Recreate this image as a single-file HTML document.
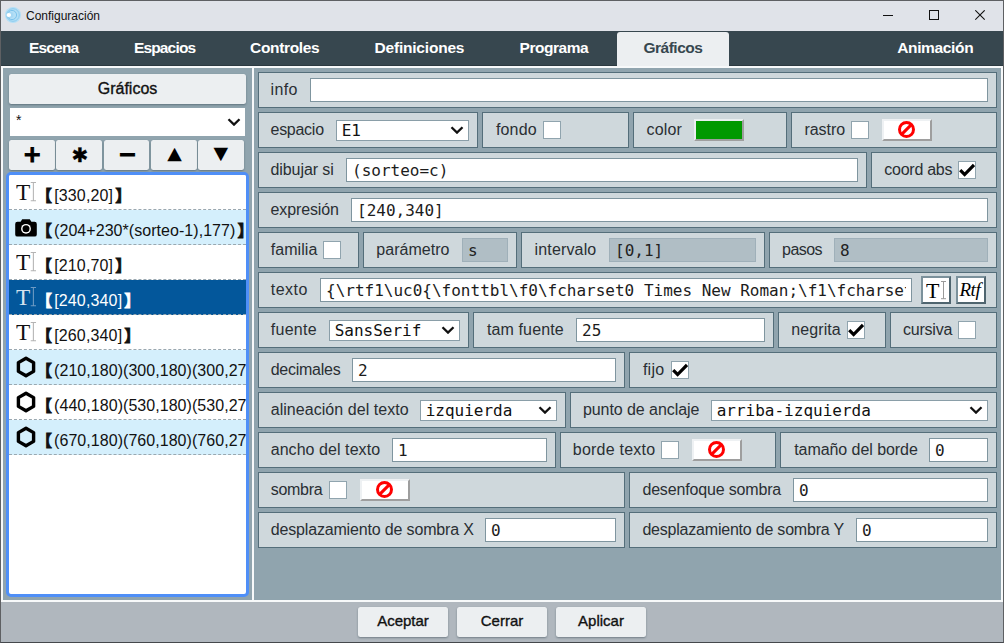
<!DOCTYPE html>
<html lang="es">
<head>
<meta charset="utf-8">
<title>Configuración</title>
<style>
*{box-sizing:border-box;margin:0;padding:0}
html,body{width:1004px;height:643px;overflow:hidden;background:#90a4ae}
body{position:relative;font-family:"Liberation Sans",sans-serif;font-size:16px;color:#111;line-height:1}
#frame{position:absolute;left:0;top:0;width:1004px;height:643px;border:1px solid #5e6063;border-bottom-color:#44484c;z-index:50}
#titlebar{position:absolute;left:0;top:0;width:1004px;height:31px;background:#e0e3e9}
#titlebar .ttl{position:absolute;left:26px;top:9px;font-size:12px;line-height:14px;color:#111}
#titlebar svg{position:absolute}
#tabs{position:absolute;left:0;top:31px;width:1004px;height:35px;background:#37474f;border-bottom:1px solid #2c3a41}
#acttab{position:absolute;left:617px;top:1px;width:112px;height:34px;background:#eceff1;border-radius:3px 3px 0 0}
.tabt{position:absolute;top:7px;font-weight:bold;font-size:15.500px;line-height:19px;white-space:nowrap}
#main{position:absolute;left:1px;top:66px;width:1002px;height:536px;background:#90a4ae;border:2px solid #f7f9fa}
#vsep{position:absolute;left:252px;top:68px;width:2px;height:532px;background:#f7f9fa}
#bottom{position:absolute;left:0;top:602px;width:1004px;height:41px;background:#b0b7be}
.btn{position:absolute;background:#eceff1;border-radius:2.500px;box-shadow:0 1px 2px rgba(40,60,70,.45);text-align:center;color:#111;white-space:nowrap;-webkit-text-stroke:.35px #111}
.g{position:absolute;font-family:"DejaVu Sans","Liberation Sans",sans-serif;font-weight:bold;color:#000;-webkit-text-stroke:0;display:block}
.box{position:absolute;height:36px;background:#cfd8dc;border:1px solid #546e7a;white-space:nowrap;color:#222}
.box>*{position:absolute}
.lbl{top:8px;line-height:18px;font-size:16px;color:#2a2f33;white-space:pre}
.inp{top:5px;height:24px;background:#fff;border:1px solid #7f959f;font-family:"DejaVu Sans Mono","Liberation Mono",monospace;font-size:16px;line-height:23px;padding-left:5px;color:#1c1c1c;overflow:hidden;white-space:pre}
.inp::after{content:"";position:absolute;right:0;top:0;bottom:0;width:5px;background:inherit}
.inp.dis{background:#b0bec5;border-color:#9fb0b9;color:#222}
.sel{top:7px;height:21px;background:#fff;border:1px solid #8a9ea8;font-family:"DejaVu Sans Mono","Liberation Mono",monospace;font-size:16px;line-height:19px;padding-left:4.700px;color:#111;overflow:hidden;white-space:pre}
.sel .arr{position:absolute;right:4px;top:5.400px}
.chk{top:8px;width:18px;height:18px;background:#fff;border:1px solid #90a4ae}
.chk .ck{position:absolute;left:0;top:0}
.nob{top:6px;height:22px;background:#fff;border:2px solid #eef1f3;border-right-color:#9e9e9e;border-bottom-color:#9e9e9e;text-align:center}
.nob svg{position:absolute;left:50%;top:-.600px;margin-left:-9.600px}
.col{top:6px;height:22px;background:#009900;border:2px solid #e9eef0;border-right-color:#9e9e9e;border-bottom-color:#9e9e9e}
.tb{top:3px;height:28px;background:#fff;border:2px solid #7b919b;border-right-color:#4f656f;border-bottom-color:#4f656f}
.tb svg{position:absolute;left:2.700px;top:2.800px}
.rtf{position:absolute;left:1.500px;top:.500px;font-family:"Liberation Serif",serif;font-style:italic;font-size:19px;line-height:22px;letter-spacing:-.5px;color:#000}
#list{position:absolute;left:6px;top:172px;width:243px;height:425px;background:#fff;border:3px solid #4f8ff7;border-radius:5px;overflow:hidden}
.li{position:absolute;left:0;width:237px;height:35px;border-bottom:1px dashed #9aa8b0;background:#fff;overflow:hidden;white-space:nowrap}
.li.alt{background:#d4effc}
.li.selr{background:#03579b;color:#fff}
.li .ic{position:absolute;left:6px;top:7px}
.li .icT{left:6.800px;top:7.100px}
.li .icH{left:7.300px;top:6px}
.li .icC{left:6.400px;top:7.800px}
.li .lt{position:absolute;left:25px;top:9px;font-size:16px;line-height:20px;color:#111;letter-spacing:.15px}
.li.selr .lt{color:#fff}
.br{margin:0 2px;-webkit-text-stroke:.9px currentColor;font-family:"Noto Sans CJK JP","Noto Sans CJK SC",sans-serif;font-weight:bold}
#lsel{position:absolute;left:10px;top:108px;width:235px;height:28px;background:#fff}
</style>
</head>
<body>
<div id="titlebar">
<svg style="left:5px;top:7px" width="16" height="16" viewBox="0 0 16 16"><circle cx="8" cy="8" r="8" fill="#b4dff6"/><circle cx="8" cy="8" r="6.3" fill="none" stroke="#8ccbee" stroke-width="1"/><circle cx="7" cy="8" r="4.600" fill="none" stroke="#7cc3ec" stroke-width="1"/><circle cx="5.500" cy="8" r="3" fill="#a6d8f4"/><ellipse cx="3.800" cy="8" rx="2.300" ry="1.900" fill="#fff"/></svg>
<span class="ttl">Configuración</span>
<svg style="left:883px;top:10px" width="11" height="11" viewBox="0 0 11 11"><path d="M0 5.500h10" stroke="#111" stroke-width="1"/></svg>
<svg style="left:929px;top:10px" width="11" height="11" viewBox="0 0 11 11"><rect x=".5" y=".5" width="9" height="9" fill="none" stroke="#111" stroke-width="1"/></svg>
<svg style="left:975px;top:10px" width="11" height="11" viewBox="0 0 11 11"><path d="M.3.300l9.400 9.400M9.700.300.300 9.700" stroke="#111" stroke-width="1.100"/></svg>
</div>
<div id="tabs"><div id="acttab"></div>
<span class="tabt" style="left:29.0px;letter-spacing:-0.83px;color:#fff">Escena</span>
<span class="tabt" style="left:133.9px;letter-spacing:-0.83px;color:#fff">Espacios</span>
<span class="tabt" style="left:250.1px;letter-spacing:-0.35px;color:#fff">Controles</span>
<span class="tabt" style="left:374.5px;letter-spacing:-0.2px;color:#fff">Definiciones</span>
<span class="tabt" style="left:519.5px;letter-spacing:-0.45px;color:#fff">Programa</span>
<span class="tabt" style="left:643.5px;letter-spacing:-0.51px;color:#37474f">Gráficos</span>
<span class="tabt" style="left:897.2px;letter-spacing:-0.35px;color:#fff">Animación</span>
</div>
<div id="main"></div>
<div id="vsep"></div>

<div class="btn" style="left:9px;top:74px;width:237px;height:30px;line-height:30px;font-size:16px">Gráficos</div>
<div id="lsel"><span style="position:absolute;left:6px;top:5px;font-size:14px">*</span><svg style="position:absolute;right:4px;top:10px" width="14" height="8" viewBox="0 0 14 8"><path d="M1.500 1.200 7 6.600 12.500 1.200" fill="none" stroke="#111" stroke-width="2.300"/></svg></div>

<div class="btn" style="left:9px;top:140px;width:45.800px;height:30px"><span class="g" style="left:13.64px;top:3.30px;font-size:22.7px;line-height:22.7px;-webkit-text-stroke:.9px #000;">+</span></div>
<div class="btn" style="left:56.3px;top:140px;width:45.800px;height:30px"><span class="g" style="left:15.30px;top:5.25px;font-size:20px;line-height:20px;-webkit-text-stroke:.3px #000;">✱</span></div>
<div class="btn" style="left:103.6px;top:140px;width:45.800px;height:30px"><span class="g" style="left:14.04px;top:2.60px;font-size:22.7px;line-height:22.7px;-webkit-text-stroke:.9px #000;">−</span></div>
<div class="btn" style="left:150.9px;top:140px;width:45.800px;height:30px"><span class="g" style="left:16.30px;top:3.80px;font-size:19px;line-height:19px;transform:scaleY(.92);">▲</span></div>
<div class="btn" style="left:198.2px;top:140px;width:45.800px;height:30px"><span class="g" style="left:15.40px;top:3.70px;font-size:19px;line-height:19px;transform:scaleY(.92);">▼</span></div>

<div id="list">
<div class="li" style="top:0px"><span class="ic icT"><svg width="23.32" height="21.2" viewBox="0 0 22 20"><text x="0" y="17" font-family="Liberation Serif,serif" font-size="22" fill="#111">T</text><path d="M13.9 .500h5M16.4 .500v17.200M13.9 17.700h5" stroke="#b4b4b4" stroke-width="1" fill="none"/></svg></span><span class="lt"><span class="br">【</span>[330,20]<span class="br">】</span></span></div>
<div class="li alt" style="top:35px"><span class="ic icC"><svg width="22" height="20" viewBox="0 0 22 20"><path d="M7.2 1.2h7.6l1.6 2.6h3.2a2.2 2.2 0 0 1 2.2 2.2v10.4a2.2 2.2 0 0 1-2.2 2.2H2.4a2.2 2.2 0 0 1-2.2-2.2V6a2.2 2.2 0 0 1 2.200-2.2h3.200z" fill="#000"/><circle cx="11" cy="10.8" r="4.9" fill="#fff"/><circle cx="11" cy="10.8" r="3.500" fill="#000"/></svg></span><span class="lt" style="letter-spacing:.05px"><span class="br">【</span>(204+230*(sorteo-1),177)<span class="br">】</span></span></div>
<div class="li" style="top:70px"><span class="ic icT"><svg width="23.32" height="21.2" viewBox="0 0 22 20"><text x="0" y="17" font-family="Liberation Serif,serif" font-size="22" fill="#111">T</text><path d="M13.9 .500h5M16.4 .500v17.200M13.9 17.700h5" stroke="#b4b4b4" stroke-width="1" fill="none"/></svg></span><span class="lt"><span class="br">【</span>[210,70]<span class="br">】</span></span></div>
<div class="li alt selr" style="top:105px"><span class="ic icT"><svg width="23.32" height="21.2" viewBox="0 0 22 20"><text x="0" y="17" font-family="Liberation Serif,serif" font-size="22" fill="#d5e2ee">T</text><path d="M13.9 .500h5M16.4 .500v17.200M13.9 17.700h5" stroke="#6f9bc4" stroke-width="1" fill="none"/></svg></span><span class="lt"><span class="br">【</span>[240,340]<span class="br">】</span></span></div>
<div class="li" style="top:140px"><span class="ic icT"><svg width="23.32" height="21.2" viewBox="0 0 22 20"><text x="0" y="17" font-family="Liberation Serif,serif" font-size="22" fill="#111">T</text><path d="M13.9 .500h5M16.4 .500v17.200M13.9 17.700h5" stroke="#b4b4b4" stroke-width="1" fill="none"/></svg></span><span class="lt"><span class="br">【</span>[260,340]<span class="br">】</span></span></div>
<div class="li alt" style="top:175px"><span class="ic icH"><svg width="20" height="22" viewBox="0 0 20 22"><path d="M10 2.2 17.6 6.600v8.800L10 19.800 2.400 15.400V6.600z" fill="none" stroke="#000" stroke-width="3.400" stroke-linejoin="round"/></svg></span><span class="lt" style="letter-spacing:.05px"><span class="br">【</span>(210,180)(300,180)(300,270)(210,270)<span class="br">】</span></span></div>
<div class="li" style="top:210px"><span class="ic icH"><svg width="20" height="22" viewBox="0 0 20 22"><path d="M10 2.2 17.6 6.600v8.800L10 19.800 2.400 15.400V6.600z" fill="none" stroke="#000" stroke-width="3.400" stroke-linejoin="round"/></svg></span><span class="lt" style="letter-spacing:.05px"><span class="br">【</span>(440,180)(530,180)(530,270)(440,270)<span class="br">】</span></span></div>
<div class="li alt" style="top:245px"><span class="ic icH"><svg width="20" height="22" viewBox="0 0 20 22"><path d="M10 2.2 17.6 6.600v8.800L10 19.800 2.400 15.400V6.600z" fill="none" stroke="#000" stroke-width="3.400" stroke-linejoin="round"/></svg></span><span class="lt" style="letter-spacing:.05px"><span class="br">【</span>(670,180)(760,180)(760,270)(670,270)<span class="br">】</span></span></div>
</div>

<div class="box" style="left:258px;top:72px;width:739px">
<span class="lbl" style="left:11.5px;letter-spacing:0.4px">info</span>
<span class="inp" style="left:51px;width:678px"></span>
</div>
<div class="box" style="left:258px;top:112px;width:220px">
<span class="lbl" style="left:11.5px;letter-spacing:-0.27px">espacio</span>
<span class="sel" style="left:77px;width:133px">E1<svg class="arr" width="14" height="8" viewBox="0 0 14 8"><path d="M1.5 1.2 7 6.600 12.500 1.200" fill="none" stroke="#111" stroke-width="2.300"/></svg></span>
</div>
<div class="box" style="left:482px;top:112px;width:147px">
<span class="lbl" style="left:12.9px;letter-spacing:0.19px">fondo</span>
<span class="chk" style="left:60px"></span>
</div>
<div class="box" style="left:633px;top:112px;width:154px">
<span class="lbl" style="left:12.6px;letter-spacing:0.12px">color</span>
<span class="col" style="left:60px;width:50px"></span>
</div>
<div class="box" style="left:791px;top:112px;width:206px">
<span class="lbl" style="left:12.4px;letter-spacing:-0.03px">rastro</span>
<span class="chk" style="left:59px"></span>
<span class="nob" style="left:90px;width:50px"><svg width="19" height="19" viewBox="0 0 19 19"><circle cx="9.5" cy="9.5" r="7" fill="none" stroke="#ff0000" stroke-width="3"/><path d="M4.6 14.4 14.4 4.6" stroke="#ff0000" stroke-width="3"/></svg></span>
</div>
<div class="box" style="left:258px;top:152px;width:609px">
<span class="lbl" style="left:11.5px;letter-spacing:-0.08px">dibujar si</span>
<span class="inp" style="left:87px;width:512px">(sorteo=c)</span>
</div>
<div class="box" style="left:871px;top:152px;width:126px">
<span class="lbl" style="left:12.3px;letter-spacing:-0.26px">coord abs</span>
<span class="chk" style="left:86px"><svg class="ck" width="16" height="16" viewBox="0 0 16 16"><path d="M1.200 8.200 5.600 12.500 15 2.900" fill="none" stroke="#000" stroke-width="3.200"/></svg></span>
</div>
<div class="box" style="left:258px;top:192px;width:739px">
<span class="lbl" style="left:11.5px;letter-spacing:-0.12px">expresión</span>
<span class="inp" style="left:92px;width:637px">[240,340]</span>
</div>
<div class="box" style="left:258px;top:232px;width:101px">
<span class="lbl" style="left:11.7px;letter-spacing:0.07px">familia</span>
<span class="chk" style="left:64px"></span>
</div>
<div class="box" style="left:363px;top:232px;width:154px">
<span class="lbl" style="left:12.3px;letter-spacing:0.02px">parámetro</span>
<span class="inp dis" style="left:98px;width:46px">s</span>
</div>
<div class="box" style="left:521px;top:232px;width:244px">
<span class="lbl" style="left:12.5px;letter-spacing:0.16px">intervalo</span>
<span class="inp dis" style="left:87px;width:147px">[0,1]</span>
</div>
<div class="box" style="left:769px;top:232px;width:228px">
<span class="lbl" style="left:12.1px;letter-spacing:-0.56px">pasos</span>
<span class="inp dis" style="left:64px;width:154px">8</span>
</div>
<div class="box" style="left:258px;top:272px;width:739px">
<span class="lbl" style="left:11.7px;letter-spacing:0.5px">texto</span>
<span class="inp" style="left:61px;width:592px">{\rtf1\uc0{\fonttbl\f0\fcharset0 Times New Roman;\f1\fcharset0 Arial;}</span>
<span class="tb" style="left:662px;width:30px"><svg width="22" height="20" viewBox="0 0 22 20"><text x="0" y="17" font-family="Liberation Serif,serif" font-size="22" fill="#000">T</text><path d="M15 .500h5M17.5 .500v17.200M15 17.700h5" stroke="#9a9a9a" stroke-width="1" fill="none"/></svg></span>
<span class="tb" style="left:697px;width:30px"><span class="rtf">Rtf</span></span>
</div>
<div class="box" style="left:258px;top:312px;width:211px">
<span class="lbl" style="left:11.7px;letter-spacing:0.3px">fuente</span>
<span class="sel" style="left:70px;width:131px">SansSerif<svg class="arr" width="14" height="8" viewBox="0 0 14 8"><path d="M1.5 1.2 7 6.600 12.500 1.200" fill="none" stroke="#111" stroke-width="2.300"/></svg></span>
</div>
<div class="box" style="left:473px;top:312px;width:301px">
<span class="lbl" style="left:12.9px;letter-spacing:0.13px">tam fuente</span>
<span class="inp" style="left:102px;width:189px">25</span>
</div>
<div class="box" style="left:778px;top:312px;width:108px">
<span class="lbl" style="left:12.2px;letter-spacing:0.11px">negrita</span>
<span class="chk" style="left:68px"><svg class="ck" width="16" height="16" viewBox="0 0 16 16"><path d="M1.200 8.200 5.600 12.500 15 2.900" fill="none" stroke="#000" stroke-width="3.200"/></svg></span>
</div>
<div class="box" style="left:890px;top:312px;width:107px">
<span class="lbl" style="left:11.9px;letter-spacing:-0.2px">cursiva</span>
<span class="chk" style="left:67px"></span>
</div>
<div class="box" style="left:258px;top:352px;width:367px">
<span class="lbl" style="left:11.7px;letter-spacing:-0.26px">decimales</span>
<span class="inp" style="left:93px;width:264px">2</span>
</div>
<div class="box" style="left:629px;top:352px;width:368px">
<span class="lbl" style="left:12.9px;letter-spacing:0.26px">fijo</span>
<span class="chk" style="left:41px"><svg class="ck" width="16" height="16" viewBox="0 0 16 16"><path d="M1.200 8.200 5.600 12.500 15 2.900" fill="none" stroke="#000" stroke-width="3.200"/></svg></span>
</div>
<div class="box" style="left:258px;top:392px;width:308px">
<span class="lbl" style="left:11.7px;letter-spacing:0.05px">alineación del texto</span>
<span class="sel" style="left:161px;width:137px">izquierda<svg class="arr" width="14" height="8" viewBox="0 0 14 8"><path d="M1.5 1.2 7 6.600 12.500 1.200" fill="none" stroke="#111" stroke-width="2.300"/></svg></span>
</div>
<div class="box" style="left:570px;top:392px;width:427px">
<span class="lbl" style="left:11.9px;letter-spacing:-0.06px">punto de anclaje</span>
<span class="sel" style="left:140px;width:277px">arriba-izquierda<svg class="arr" width="14" height="8" viewBox="0 0 14 8"><path d="M1.5 1.2 7 6.600 12.500 1.200" fill="none" stroke="#111" stroke-width="2.300"/></svg></span>
</div>
<div class="box" style="left:258px;top:432px;width:298px">
<span class="lbl" style="left:11.7px;letter-spacing:0.06px">ancho del texto</span>
<span class="inp" style="left:133px;width:155px">1</span>
</div>
<div class="box" style="left:560px;top:432px;width:216px">
<span class="lbl" style="left:11.8px;letter-spacing:0.23px">borde texto</span>
<span class="chk" style="left:100px"></span>
<span class="nob" style="left:131px;width:50px"><svg width="19" height="19" viewBox="0 0 19 19"><circle cx="9.5" cy="9.5" r="7" fill="none" stroke="#ff0000" stroke-width="3"/><path d="M4.6 14.4 14.4 4.6" stroke="#ff0000" stroke-width="3"/></svg></span>
</div>
<div class="box" style="left:780px;top:432px;width:217px">
<span class="lbl" style="left:13.2px;letter-spacing:-0.06px">tamaño del borde</span>
<span class="inp" style="left:148px;width:59px">0</span>
</div>
<div class="box" style="left:258px;top:472px;width:367px">
<span class="lbl" style="left:11.7px;letter-spacing:-0.28px">sombra</span>
<span class="chk" style="left:70px"></span>
<span class="nob" style="left:101px;width:50px"><svg width="19" height="19" viewBox="0 0 19 19"><circle cx="9.5" cy="9.5" r="7" fill="none" stroke="#ff0000" stroke-width="3"/><path d="M4.6 14.4 14.4 4.6" stroke="#ff0000" stroke-width="3"/></svg></span>
</div>
<div class="box" style="left:629px;top:472px;width:368px">
<span class="lbl" style="left:12.4px;letter-spacing:-0.16px">desenfoque sombra</span>
<span class="inp" style="left:163px;width:195px">0</span>
</div>
<div class="box" style="left:258px;top:512px;width:367px">
<span class="lbl" style="left:11.7px;letter-spacing:-0.16px">desplazamiento de sombra X</span>
<span class="inp" style="left:226px;width:131px">0</span>
</div>
<div class="box" style="left:629px;top:512px;width:368px">
<span class="lbl" style="left:12.4px;letter-spacing:-0.21px">desplazamiento de sombra Y</span>
<span class="inp" style="left:226px;width:132px">0</span>
</div>

<div id="bottom">
<div class="btn" style="left:357.800px;top:5px;width:90.400px;height:30px;line-height:28px;font-size:15px">Aceptar</div>
<div class="btn" style="left:456.800px;top:5px;width:90.400px;height:30px;line-height:28px;font-size:15px">Cerrar</div>
<div class="btn" style="left:555.800px;top:5px;width:90.400px;height:30px;line-height:28px;font-size:15px">Aplicar</div>
</div>
<div id="frame"></div>
</body>
</html>
